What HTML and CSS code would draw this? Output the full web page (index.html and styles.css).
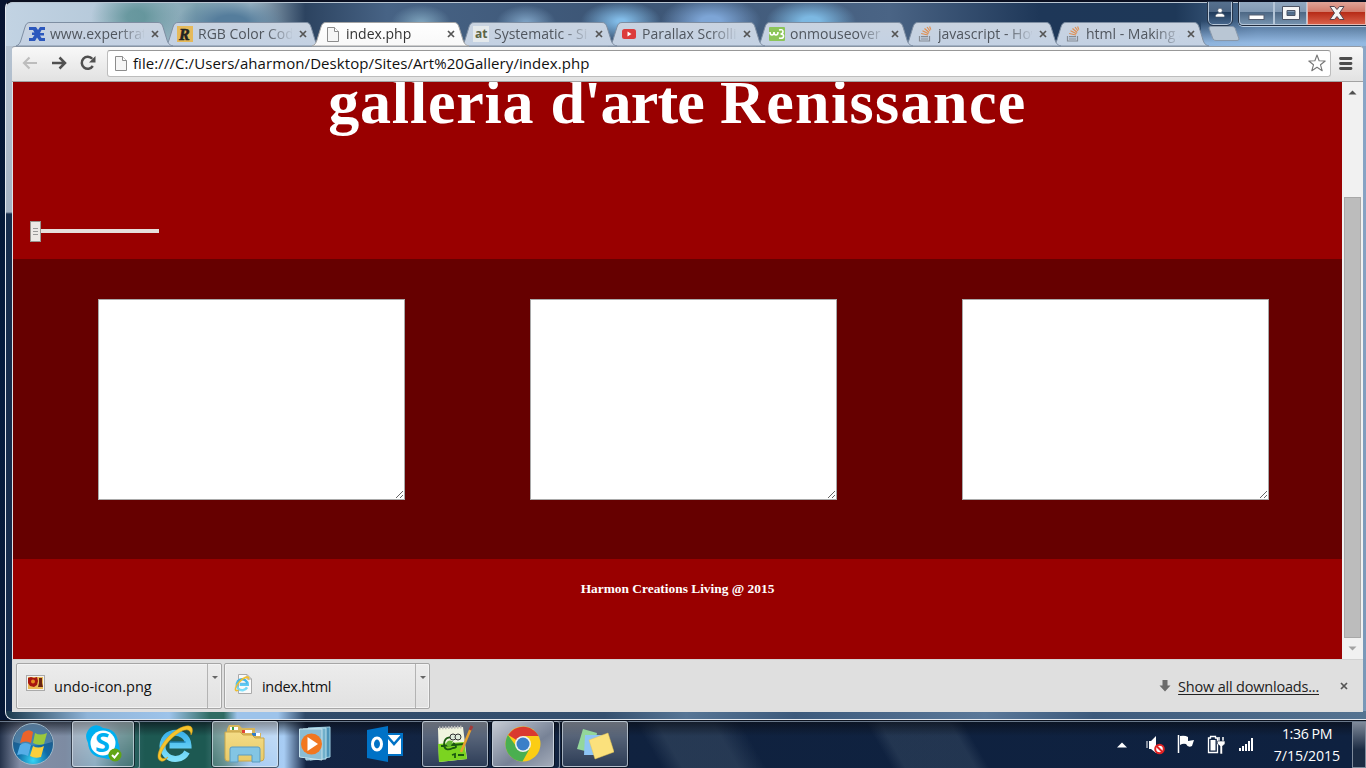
FILE: index.html
```html
<!DOCTYPE html>
<html lang="en">
<head>
<meta charset="utf-8">
<title>index.php</title>
<link rel="stylesheet" href="styles.css">
</head>
<body>
<svg class="defs" width="0" height="0">
  <defs>
    <linearGradient id="tabFill" x1="0" y1="0" x2="0" y2="1"><stop offset="0" stop-color="#c9d3e0"/><stop offset="1" stop-color="#c3d1e3"/></linearGradient>
    <linearGradient id="tabActive" x1="0" y1="0" x2="0" y2="1"><stop offset="0" stop-color="#fff"/><stop offset="1" stop-color="#f8f8f8"/></linearGradient>
    <radialGradient id="orb" cx=".5" cy=".9" r=".85"><stop offset="0" stop-color="#35d5f5"/><stop offset=".45" stop-color="#116aa5"/><stop offset="1" stop-color="#29537b"/></radialGradient>
    <linearGradient id="folder" x1="0" y1="0" x2="0" y2="1"><stop offset="0" stop-color="#f4dc86"/><stop offset="1" stop-color="#e8cb6a"/></linearGradient>
    <linearGradient id="ieBlue" x1="0" y1="0" x2="0" y2="1"><stop offset="0" stop-color="#3bb2ea"/><stop offset="1" stop-color="#7fe0fa"/></linearGradient>
    <symbol id="tabShape" viewBox="0 0 158 25"><path d="M0 24C3 23 4 21 5 18L9 5C10 2 11 .5 14 .5H142C145 .5 146 2 147 5L151 18C152 21 153 23 157 24Z"/></symbol>
    <symbol id="x" viewBox="0 0 8 8"><path d="M1 1L7 7M7 1L1 7" stroke="#555" stroke-width="1.7"/></symbol>
    <symbol id="page" viewBox="0 0 12 15"><path d="M.5.5H7.5L11.500 4.500V14.500H.5Z" fill="#f6f6f6" stroke="#8c8c8c"/><path d="M7.500.5V4.500H11.500" fill="#fff" stroke="#8c8c8c"/></symbol>
    <symbol id="so" viewBox="0 0 14 16"><path d="M1.500 10V15H11.500V10M3 13H10M3 10.600H10" fill="none" stroke="#868c94" stroke-width="1.200"/><path d="M3.200 7.500L10 9M4.500 4.800L10.500 7.800M6.500 2.500L11.200 6.500M9 1L12 5M11.600.5L12.800 3.600" stroke="#e08f50" stroke-width="1.200"/></symbol>
    <symbol id="ie" viewBox="0 0 38 38">
      <path d="M31 27A13 13 0 1 1 32.500 20.500H13.500" fill="none" stroke="url(#ieBlue)" stroke-width="6"/>
      <path d="M14 17H30" stroke="#1c8dd0" stroke-width="1"/>
      <path d="M5 36C-2 34 4 20 13 11C22 2 34-2 36 3C37 6 36 8 35 10C35 5 31 3 24 7C12 14 3 29 5 32C6 34 9 34 12 32C10 35 7 37 5 36Z" fill="#f6c52e" stroke="#d99a12" stroke-width=".5"/>
    </symbol>
  </defs>
</svg>
<div class="desktop">
  <main class="window">
    <header class="titlebar">
      <nav class="tabs">
        <div class="tab"><svg class="shape"><use href="#tabShape"/></svg>
          <svg class="fav" viewBox="0 0 16 16"><path d="M0 1H7L9 4L11 1H16V4H12.500L11 7H15V9.500H11L12.500 12H16V15H10.500L8 11.500L6 15H0V12H3.500L5.500 9H3V6.500H5.500L4 4H0Z" fill="#2c58bd"/></svg>
          <span>www.expertratings</span><svg class="close"><use href="#x"/></svg></div>
        <div class="tab"><svg class="shape"><use href="#tabShape"/></svg>
          <svg class="fav" viewBox="0 0 16 16"><rect width="16" height="16" fill="#e5b95a"/><text class="fav-r" x="2" y="14">R</text></svg>
          <span>RGB Color Codes</span><svg class="close"><use href="#x"/></svg></div>
        <div class="tab active"><svg class="shape"><use href="#tabShape"/></svg>
          <svg class="fav page"><use href="#page"/></svg>
          <span>index.php</span><svg class="close"><use href="#x"/></svg></div>
        <div class="tab"><svg class="shape"><use href="#tabShape"/></svg>
          <svg class="fav" viewBox="0 0 16 16"><rect width="16" height="16" fill="#e4e9ec"/><text class="fav-at" x="2" y="12">at</text></svg>
          <span>Systematic - Sim</span><svg class="close"><use href="#x"/></svg></div>
        <div class="tab"><svg class="shape"><use href="#tabShape"/></svg>
          <svg class="fav" viewBox="0 0 16 16"><rect x="1" y="3" width="14" height="10" rx="2.500" fill="#dc3c3c"/><path d="M6.500 5.500V10.500L10.500 8Z" fill="#fff"/></svg>
          <span>Parallax Scrolling</span><svg class="close"><use href="#x"/></svg></div>
        <div class="tab"><svg class="shape"><use href="#tabShape"/></svg>
          <svg class="fav" viewBox="0 0 16 16"><rect width="16" height="14" y="1" rx="1" fill="#8cc55a"/><path d="M1 6Q1 9 3 9T5 6Q5 9 7 9T9 6M10 4Q14 3 14 5.500T11.500 8Q15 8 14.500 10.500T10 12" fill="none" stroke="#fff" stroke-width="1.600"/></svg>
          <span>onmouseover E</span><svg class="close"><use href="#x"/></svg></div>
        <div class="tab"><svg class="shape"><use href="#tabShape"/></svg>
          <svg class="fav so"><use href="#so"/></svg>
          <span>javascript - How</span><svg class="close"><use href="#x"/></svg></div>
        <div class="tab"><svg class="shape"><use href="#tabShape"/></svg>
          <svg class="fav so"><use href="#so"/></svg>
          <span>html - Making a</span><svg class="close"><use href="#x"/></svg></div>
        <svg class="new-tab" viewBox="0 0 32 16"><path d="M3 .5H24Q26 .5 27 2L31 13Q31 14.500 29 14.500H8Q6 14.500 5 13L1 2Q1 .5 3 .5Z" fill="#b9c6d4" stroke="#8998aa"/></svg>
      </nav>
      <div class="controls">
        <div class="ctl user"><svg width="12" height="12" viewBox="0 0 12 12"><circle cx="6" cy="3.500" r="2.300" fill="#fff" stroke="#4b5768" stroke-width=".6"/><path d="M1.500 10V8.500Q2 6.500 4.500 6.500H7.500Q10 6.500 10.500 8.500V10Z" fill="#fff" stroke="#4b5768" stroke-width=".6"/></svg></div>
        <div class="group">
          <div class="ctl min"><svg width="18" height="7"><rect x="1" y="1" width="15" height="4.500" fill="#fff" stroke="#555e70"/></svg></div>
          <div class="ctl max"><svg width="20" height="16"><path d="M1.500 1.500H18.500V14.500H1.500ZM6 5.500H14V10.500H6Z" fill="#f6f6f6" fill-rule="evenodd" stroke="#4d5464"/></svg></div>
          <div class="ctl shut"><svg width="18" height="16" viewBox="0 0 18 16"><path d="M2 1.500H6.500L9 4.500L11.500 1.500H16L11.500 8L16 14.500H11.500L9 11.500L6.500 14.500H2L6.500 8Z" fill="#f5f5f5" stroke="#554650"/></svg></div>
        </div>
      </div>
    </header>
    <div class="browser">
      <div class="toolbar">
        <svg class="back" width="16" height="14" viewBox="0 0 16 14"><path d="M15 7H2M7.500 1.500L2 7L7.500 12.500" fill="none" stroke="#bdbdbd" stroke-width="2.200"/></svg>
        <svg class="fwd" width="16" height="14" viewBox="0 0 16 14"><path d="M1 7H14M8.500 1.500L14 7L8.500 12.500" fill="none" stroke="#505050" stroke-width="2.500"/></svg>
        <svg class="reload" width="16" height="16" viewBox="0 0 16 16"><path d="M12.800 11A6 6 0 1 1 12.300 3.800" fill="none" stroke="#505050" stroke-width="2.500"/><path d="M15.500 1V7.500H9Z" fill="#505050"/></svg>
        <div class="address">
          <svg width="12" height="15"><use href="#page"/></svg>
          <span>file:///C:/Users/aharmon/Desktop/Sites/Art%20Gallery/index.php</span>
          <svg class="star" width="18" height="18" viewBox="0 0 18 18"><path d="M9 1L11.100 6.700L17.200 7L12.500 10.800L14.200 16.700L9 13.300L3.800 16.700L5.500 10.800L.8 7L6.900 6.700Z" fill="#fff" stroke="#777" stroke-width="1.100" stroke-linejoin="round"/></svg>
        </div>
        <svg class="menu" width="14" height="13" viewBox="0 0 14 13"><path d="M1.500 1.500H12M1.500 6.500H12M1.500 11.500H12" stroke="#4d4d4d" stroke-width="2.800" stroke-linecap="round"/></svg>
      </div>
      <div class="viewport">
        <div class="page-body">
          <section class="hero">
            <h1><span class="w1">galleria</span> <span class="w2">d'arte</span> <span class="w3">Renissance</span></h1>
            <div class="slider"><i class="thumb"><b></b><b></b><b></b></i><i class="track"></i></div>
          </section>
          <section class="boxes"><textarea></textarea><textarea></textarea><textarea></textarea></section>
          <footer>Harmon Creations Living @ 2015</footer>
        </div>
        <div class="scrollbar">
          <svg width="9" height="5"><path d="M.5 4.500L4.500.5L8.500 4.500Z" fill="#505050"/></svg>
          <div class="bar"></div>
          <svg width="9" height="5"><path d="M.5.5L4.500 4.500L8.500.5Z" fill="#a3a3a3"/></svg>
        </div>
      </div>
      <div class="downloads">
        <div class="dl">
          <svg width="20" height="20" viewBox="0 0 20 20"><rect x=".5" y="1.500" width="18" height="15" fill="#f5f1ec" stroke="#aaa"/><rect x="2" y="3" width="15" height="12" fill="#e9b956"/><path d="M2 4L5 3L8 4L11 3L12 7L11 11L8 13L4 12L2 9Z" fill="#a61510"/><circle cx="7" cy="7.500" r="2" fill="#e78b20"/><path d="M13 4H16V9L17 13H12L13 9Z" fill="#6a2413"/></svg>
          <span>undo-icon.png</span><i class="drop"></i></div>
        <div class="dl second">
          <svg width="20" height="22" viewBox="0 0 20 22"><path d="M4.500 1.500H13L17.500 6V20.500H4.500Z" fill="#fafafa" stroke="#aaa"/><path d="M13 1.500V6H17.500" fill="none" stroke="#aaa"/><use href="#ie" x="0" y="3" width="16" height="16"/></svg>
          <span>index.html</span><i class="drop"></i></div>
        <svg class="arrow" width="12" height="12" viewBox="0 0 12 12"><path d="M3.500 0H8.500V5.500H11.500L6 11.500L.5 5.500H3.500Z" fill="#6b6b6b"/></svg>
        <a class="show">Show all downloads...</a>
        <svg class="shelf-x" width="8" height="8"><use href="#x"/></svg>
      </div>
    </div>
  </main>
  <div class="taskbar">
    <svg class="start" width="44" height="44" viewBox="0 0 44 44"><circle cx="22" cy="22" r="20.500" fill="url(#orb)" stroke="#9fb8c8"/><path d="M3 20A19 18 0 0 1 41 20Q22 27 3 20Z" fill="#fff" opacity=".2"/><path d="M12 11Q17 6 22 10L20 21Q15 18 9 21Z" fill="#ec632b"/><path d="M24 11Q29 14 36 11L33 22Q27 24 22 21Z" fill="#9bc83c"/><path d="M9 23Q14 19 20 23L17 34Q12 31 6 33Z" fill="#56aee8"/><path d="M22 24Q27 27 33 24L30 35Q24 37 19 34Z" fill="#fbcf3b"/></svg>
    <div class="task skype stack"><svg width="40" height="40" viewBox="0 0 40 40"><path d="M8 3Q14-1 20 4Q34 5 35 18Q39 26 34 32Q28 37 21 34Q6 33 5 19Q0 10 8 3Z" fill="#00aff0"/><circle cx="20" cy="19" r="12.500" fill="#fff"/><text class="sk" x="12" y="28">S</text><circle cx="32" cy="31" r="6.500" fill="#61a515"/><path d="M29 31L31.500 33.500L35.500 28.500" fill="none" stroke="#fff" stroke-width="2"/></svg></div>
    <div class="task iebtn"><svg width="38" height="38"><use href="#ie"/></svg></div>
    <div class="task folder"><svg width="42" height="40" viewBox="0 0 42 40"><path d="M3 5L5 1H15L18 4H31V9H37V35L34 37H3Z" fill="#d8b65b"/><path d="M6 3H14V6H6M18 6H28V9H18M29 9H36V12H29" fill="#fff"/><path d="M8 3H10V6H8" fill="#399944"/><path d="M18 6H21V9H18" fill="#e24535"/><path d="M28 9H32V12H28" fill="#327dc8"/><path d="M1 8H16L19 11H28L31 14H40V34Q40 37 37 37H3Q1 37 1 34Z" fill="url(#folder)" stroke="#c9a649"/><path d="M6 37V25Q6 23 8 23H34Q36 23 36 25V38H28V31H14V38H6Z" fill="#83c5e4" stroke="#5a9bc0"/></svg></div>
    <div class="task wmp"><svg width="34" height="36" viewBox="0 0 34 36"><path d="M10 2L32 1V31L12 34Z" fill="#4d94b8" stroke="#a0d2e5"/><path d="M5 3L28 2V33L8 34Z" fill="#70b0cb" stroke="#b9dfec"/><path d="M1.500 3L24 3V34L1.500 31Z" fill="#8bbdd4" stroke="#c5e2ed"/><circle cx="13.500" cy="18" r="10.500" fill="#f17720"/><path d="M9.500 11V25L20 18Z" fill="#fff"/></svg></div>
    <div class="task outlook"><svg width="38" height="38" viewBox="0 0 38 38"><path d="M21 9H36V30H21Z" fill="#fff" stroke="#0072c6" stroke-width="2"/><path d="M21 11L28 19L36 10" fill="none" stroke="#0072c6" stroke-width="2.500"/><path d="M1 5L22 1V37L1 33Z" fill="#0072c6"/><ellipse cx="11" cy="19" rx="4.500" ry="6" fill="none" stroke="#fff" stroke-width="3"/></svg></div>
    <div class="task npp"><svg width="38" height="38" viewBox="0 0 38 38"><path d="M2 3L27 2L31 34L3 37Z" fill="#f1f5df"/><path d="M2 19L28 17L31 34L3 37Z" fill="#7bd420"/><path d="M3 3L27 2" stroke="#bbb" stroke-width="3" stroke-dasharray="1.500 1.500"/><path d="M19 13Q8 10 8 20Q9 27 17 23Q23 23 17 18M5 21L28 19M16 30L19 29V33M22 30H28" fill="none" stroke="#1b5810" stroke-width="1.800"/><path d="M10 19Q11 14 17 16L15 21Q12 23 10 19" fill="#65b634"/><circle cx="17" cy="12" r="3" fill="#dfecdb" stroke="#333"/><circle cx="22" cy="12" r="3" fill="#dfecdb" stroke="#333"/><path d="M25 27L35 3" stroke="#e6a22d" stroke-width="2.500"/><path d="M34 5L36 1" stroke="#a33a38" stroke-width="3"/></svg></div>
    <div class="task chrome stack"><svg width="36" height="36" viewBox="0 0 36 36"><circle cx="18" cy="18" r="17.500" fill="#fbcd15"/><path d="M18 18L3.300 9A17.500 17.500 0 0 1 33.500 10H18Z" fill="#da3a2f"/><path d="M3 9A17.500 17.500 0 0 0 17.500 35.500L25 22L18 18L11 20Z" fill="#4aaf50"/><circle cx="18" cy="18" r="8" fill="#f0f2f0"/><circle cx="18" cy="18" r="6.500" fill="#3b7fc8"/></svg></div>
    <div class="task notes"><svg width="38" height="32" viewBox="0 0 38 32"><path d="M7 1L21 5L17 25L1 21Z" fill="#93d79b"/><path d="M9 7H27V27H8Z" fill="#8ec5f5"/><path d="M13 12L32 5L38 24L19 31Z" fill="#fbe17c" stroke="#e5c452" stroke-width=".5"/></svg></div>
    <div class="tray">
      <svg width="10" height="6"><path d="M0 5.500L5 .5L10 5.500Z" fill="#fff"/></svg>
      <svg class="vol" width="20" height="20" viewBox="0 0 20 20"><path d="M3 6H5L10 1V18L5 14H3Z" fill="#fff"/><path d="M1 6V13" stroke="#fff"/><circle cx="13.500" cy="14" r="4.300" fill="#fff" stroke="#e22222" stroke-width="2"/><path d="M10.500 11L16.500 17" stroke="#e22222" stroke-width="2"/></svg>
      <svg class="flag" width="18" height="19" viewBox="0 0 18 19"><path d="M1.500 0V18" stroke="#fff" stroke-width="1.500"/><path d="M3 1Q8 0 11 2V6L17 5L15 11Q11 13 9 9Q6 8 3 10Z" fill="#fff"/></svg>
      <svg class="batt" width="19" height="20" viewBox="0 0 19 20"><path d="M3.500 1.500H8.500V3H10.500V17.500H1.500V3H3.500Z" fill="none" stroke="#fff" stroke-width="1.300"/><path d="M3.500 5H8.500V15.500H3.500Z" fill="#fff"/><path d="M12 2V6M16 2V6" stroke="#fff" stroke-width="1.500"/><path d="M10.500 6H18V9L15.500 11V19H13V11L10.500 9Z" fill="#fff" stroke="#17253c" stroke-width=".6"/></svg>
      <svg class="net" width="15" height="14"><path d="M0 10H2V13H0ZM3 8H5V13H3ZM6 6H8V13H6ZM9 3H11V13H9ZM12 0H14V13H12Z" fill="#fff"/></svg>
      <div class="clock"><span>1:36 PM</span><span>7/15/2015</span></div>
      <div class="peek"></div>
    </div>
  </div>
</div>
</body>
</html>
```
FILE: styles.css
```css
* { box-sizing: border-box; }
body { margin: 0; font-family: "Open Sans", "Noto Sans", sans-serif; overflow: hidden; }
svg { display: block; flex: none; }
.defs { position: absolute; }

.desktop {
  width: 1366px; height: 768px; display: flex; flex-direction: column;
  background: linear-gradient(180deg, #061330 0, #041838 200px, #041b3e 400px, #061734 100%);
}

/* window frame */
.window {
  height: 720px; margin: 0 0 0 5px; padding: 0 3px 7px 6px;
  display: flex; flex-direction: column;
  border: 1px solid #e3e8ef; border-top: 2px solid #0a0f20; border-right: 0; border-radius: 8px 0 0 8px;
  background:
    linear-gradient(90deg, #1b3a4d 0, #8fb4d8 6%, #9dc3ea 12%, #2f6c63 15%, #2f6c63 16%, #9dc3ea 17%, #9dc3ea 20%, #2f4a69 22%, #35506f 44%, #567595 50%, #3d5a7c 58%, #5a7899 72%, #3d5a7c 80%, #557391) 0 100% / 100% 8px no-repeat,
    linear-gradient(180deg, #b9c6d4 0, #a4b2c3 210px, #172d4d 212px, #142b4d 100%) 0 0 / 8px 100% no-repeat,
    linear-gradient(180deg, #8ba7c8 0, #7897b7 100%) 100% 0 / 4px 100% no-repeat,
    #d5e2ef;
}
.titlebar {
  height: 44px; margin: 0 -3px 0 -6px; position: relative; flex: none; display: flex; align-items: flex-end;
  border-radius: 7px 0 0 0; border-top: 1px solid #b9c6d2;
  background:
    linear-gradient(180deg, transparent 18px, rgba(160, 198, 240, .85) 40px) 1195px 0 / 170px 44px no-repeat,
    radial-gradient(ellipse 45px 34px at 130px 14px, rgba(74, 133, 136, .7) 20%, transparent),
    radial-gradient(ellipse 55px 26px at 225px 20px, #557d9c 30%, transparent),
    radial-gradient(ellipse 40px 20px at 615px 18px, #82bce8 10%, transparent),
    radial-gradient(ellipse 50px 25px at 705px 18px, #7da5d6 20%, transparent),
    radial-gradient(ellipse 45px 22px at 805px 18px, #7cb8e2 20%, transparent),
    radial-gradient(ellipse 30px 18px at 415px 20px, #7a9fb9 10%, transparent),
    radial-gradient(ellipse 30px 18px at 520px 20px, #7b9fc1 10%, transparent),
    linear-gradient(90deg, #c2d3e3 0, #b3c7d8 9%, #7fa3b0 14%, #a5bcc9 18%, #2c4360 22%, #476385 28%, #3c5575 45%, #4a6485 65%, #1e3758 76%, #1e3858 86%, #4a6c92 92%, #486888 100%);
}

/* tabs */
.tabs { display: flex; height: 24px; padding-left: 11px; }
.tab {
  width: 148px; height: 24px; position: relative; display: flex; align-items: center; padding-left: 12px;
  color: #50565e; font-size: 14px;
}
.tab:nth-child(1) { z-index: 7; } .tab:nth-child(2) { z-index: 6; } .tab:nth-child(3) { z-index: 9; }
.tab:nth-child(4) { z-index: 5; } .tab:nth-child(5) { z-index: 4; } .tab:nth-child(6) { z-index: 3; }
.tab:nth-child(7) { z-index: 2; } .tab:nth-child(8) { z-index: 1; }
.shape { position: absolute; left: -1px; top: 0; width: 158px; height: 25px; fill: url(#tabFill); stroke: #7e8ea2; stroke-width: 1; z-index: -1; }
.active .shape { fill: url(#tabActive); stroke: #a5a5a5; }
.fav { width: 16px; height: 16px; }
.fav.page { width: 12px; height: 15px; margin: 0 2px; }
.fav.so { width: 14px; height: 16px; margin: 0 1px; }
.fav-r { font: italic 900 16px "Liberation Serif", serif; fill: #222; stroke: #222; stroke-width: .6px; }
.fav-at { font: bold 12px "Open Sans", sans-serif; fill: #5c6544; }
.tab span {
  margin-left: 5px; width: 94px; overflow: hidden; white-space: nowrap; line-height: 22px; flex: none;
  -webkit-mask-image: linear-gradient(90deg, #000 68px, transparent 96px);
  mask-image: linear-gradient(90deg, #000 68px, transparent 96px);
}
.active span { color: #333; }
.close { width: 8px; height: 8px; margin-left: 7px; }
.new-tab { width: 32px; height: 16px; margin: 4px 0 0 7px; }

/* window buttons */
.controls { position: absolute; right: 0; top: -1px; display: flex; z-index: 10; gap: 6px; }
.group { display: flex; border: 1px solid #202b3d; border-top: 0; border-right: 0; border-radius: 0 0 0 5px; height: 24px; box-shadow: 0 1px 0 #b9cde2; }
.ctl { display: flex; align-items: center; justify-content: center; background: linear-gradient(#92a8c0 0, #8199b3 45%, #4c6784 46%, #7692ae 100%); border: 1px solid #b4c5d7; border-top: 0; }
.user { width: 24px; height: 23px; border-radius: 0 0 5px 5px; outline: 1px solid #25344a; background: linear-gradient(#56708e 0, #4c6583 45%, #1f3a5a 46%, #45658a 100%); }
.min { width: 35px; border-radius: 0 0 0 4px; padding-top: 9px; }
.max { width: 33px; }
.shut { width: 59px; background: linear-gradient(#e0a498 0, #d27a6a 45%, #b62a16 46%, #d9604a 100%); border-color: #e6b8b0; }

/* browser chrome */
.browser { flex: 1; min-height: 0; display: flex; flex-direction: column; }
.toolbar {
  height: 36px; display: flex; align-items: center; padding: 0 10px 2px 10px; flex: none;
  background: linear-gradient(#f8f8f8, #e2e2e2); border-top: 1px solid #929aa5; border-bottom: 1px solid #a2a2a2; border-radius: 3px 3px 0 0;
}
.fwd { margin-left: 13px; }
.reload { margin-left: 13px; }
.address {
  flex: 1; height: 27px; margin: 0 8px 0 11px; padding: 0 4px 0 7px; display: flex; align-items: center;
  background: #fff; border: 1px solid #bdbdbd; border-top-color: #989898; border-radius: 3px; font-size: 15px; color: #111;
}
.address span { margin-left: 6px; flex: 1; white-space: nowrap; letter-spacing: .075px; }

/* page */
.viewport { flex: 1; min-height: 0; display: flex; }
.page-body { flex: 1; display: flex; flex-direction: column; background: #900; border-left: 1px solid #e0e3e6; }
.hero { height: 177px; display: flex; flex-direction: column; justify-content: space-between; overflow: hidden; }
h1 { margin: -15px 0 0; text-align: center; font: bold 62px/70px "Palatino Linotype", "Liberation Serif", serif; letter-spacing: .5px; color: #fff; white-space: nowrap; }
.w1 { letter-spacing: .8px; }
.w2 { letter-spacing: -.8px; }
.w3 { letter-spacing: 1.4px; }
.slider { display: flex; align-items: center; margin: 0 0 17px 17px; }
.thumb { width: 11px; height: 21px; background: #ece9e6; border: 1px solid #999590; display: flex; flex-direction: column; align-items: center; justify-content: center; gap: 2px; }
.thumb b { width: 5px; height: 1px; background: #999; }
.track { width: 118px; height: 4px; margin-bottom: 1px; background: #e6dfdc; }
.boxes { height: 300px; background: #600; padding: 40px 0 0 85px; display: flex; gap: 125px; }
textarea { width: 307px; height: 201px; margin: 0; border: 1px solid #a9a9a9; background: #fff; padding: 2px; outline: 0; border-radius: 0; flex: none; }
footer { flex: 1; padding-top: 22px; text-align: center; color: #fff; font: bold 13.400px/16px "Liberation Serif", serif; }
.scrollbar { width: 21px; background: #f1f1f1; display: flex; flex-direction: column; align-items: center; padding: 8px 0 8px; }
.scrollbar .bar { width: 17px; height: 441px; background: #bcbcbc; border: 1px solid #a8a8a8; margin-top: 102px; margin-bottom: 8px; flex: none; }

/* download shelf */
.downloads { height: 53px; flex: none; background: #dfdfdf; display: flex; align-items: center; padding: 0 15px 1px 4px; font-size: 14.500px; color: #111; border-top: 1px solid #d2d2d2; }
.dl { width: 206px; height: 46px; border: 1px solid #a6a6a6; border-radius: 2px; background: linear-gradient(#ececec, #e1e1e1); display: flex; align-items: center; padding-left: 9px; box-shadow: inset 0 0 0 1px #f3f3f3; }
.dl + .dl { margin-left: 2px; }
.dl svg { margin-bottom: 4px; }
.dl span { margin-left: 8px; flex: 1; padding-top: 2px; white-space: nowrap; }
.dl.second span { letter-spacing: -.3px; }
.drop { width: 14px; height: 44px; border-left: 1px solid #b3b3b3; display: flex; justify-content: center; padding-top: 12px; }
.drop::before { content: ""; width: 0; height: 0; border: 3px solid transparent; border-top-color: #666; }
.arrow { margin-left: auto; }
.show { margin-left: 7px; padding-top: 2px; text-decoration: underline; text-underline-offset: 2px; letter-spacing: -.2px; color: #222; white-space: nowrap; }
.shelf-x { margin-left: 21px; }

/* taskbar */
.taskbar {
  height: 48px; display: flex; padding-top: 1px; position: relative;
  box-shadow: inset 0 1px 0 #0b111d, inset 0 2px 0 #69788a;
  background:
    linear-gradient(180deg, rgba(10, 14, 22, .75) 0, transparent 16px),
    linear-gradient(60deg, transparent 47.500%, rgba(90, 110, 130, .3) 49%, rgba(90, 110, 130, .3) 53%, transparent 55%, transparent 64%, rgba(90, 110, 130, .26) 65%, rgba(90, 110, 130, .26) 70%, transparent 71%),
    linear-gradient(90deg, #26344c 0, #848fa7 20px, #7d8ba2 65px, #7ea3ba 95px, #3b6d73 120px, #1d5952 145px, #1d5952 205px, #508180 225px, #9dc4ee 250px, #a8cdf4 284px, #132544 306px, #10223f 600px, #0e2140 100%);
}
.start { margin: 1px 16px 0 11px; }
.task { width: 66px; height: 46px; display: flex; align-items: center; justify-content: center; margin-right: 4px; flex: none; position: relative; }
.skype, .folder, .npp, .chrome, .notes { border: 1px solid rgba(220, 230, 240, .65); border-radius: 3px; background: linear-gradient(rgba(255, 255, 255, .38), rgba(255, 255, 255, .12)); box-shadow: 0 0 0 1px rgba(5, 10, 20, .6); }
.stack { width: 62px; margin-right: 8px; }
.stack::after { content: ""; position: absolute; left: 61px; top: -1px; width: 5px; height: 46px; border: 1px solid rgba(200, 210, 220, .6); border-left: 0; border-radius: 0 3px 3px 0; }
.skype { margin-left: 1px; }
.chrome { background: linear-gradient(145deg, #c5cad3, #778296 60%, #a3abb9); }
.sk { font: bold 27px "Open Sans", sans-serif; fill: #00aff0; }
.tray { margin-left: auto; display: flex; align-items: center; color: #fff; }
.vol { margin-left: 19px; }
.flag { margin-left: 11px; }
.batt { margin-left: 12px; }
.net { margin-left: 13px; }
.clock { width: 91px; margin-left: 6px; padding-left: 3px; display: flex; flex-direction: column; align-items: center; font-size: 14.200px; letter-spacing: -.1px; line-height: 22px; }
.clock span:first-child { letter-spacing: -.4px; }
.peek { width: 14px; height: 46px; margin-left: 1px; border: 1px solid #7d8a9b; background: linear-gradient(#7c8797, #1c2c44 60%); }
```
